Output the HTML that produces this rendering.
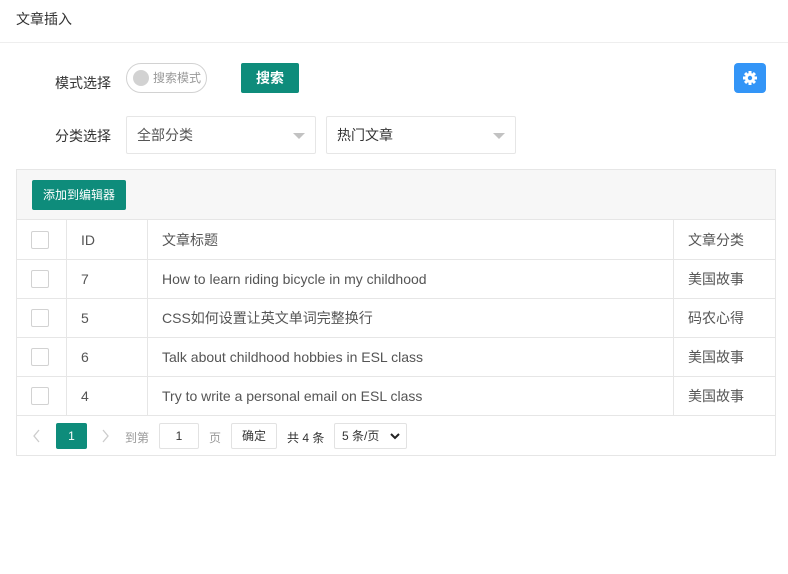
<!DOCTYPE html><html><head><meta charset="utf-8"><style>
*{box-sizing:border-box;margin:0;padding:0}
body{width:788px;height:574px;background:#fff;font-family:"Liberation Sans","Noto Sans CJK SC",sans-serif;font-size:14px;color:#333;position:relative;overflow:hidden}
.a{position:absolute}
.hd{left:0;top:0;width:788px;height:43px;border-bottom:1px solid #eee;padding:9px 16px;font-size:14px}
.btn{background:#0e8c7b;color:#fff;border-radius:2px;text-align:center}
.sel{border:1px solid #e6e6e6;border-radius:2px;height:38px;padding:0 10px;line-height:36px;color:#555}
.tri{position:absolute;right:10px;top:16px;border:6px solid transparent;border-top-color:#c2c2c2}
table{border-collapse:collapse;position:absolute;left:16px;top:219px;width:760px}
td{border:1px solid #e6e6e6;height:39px;padding:0 14px;color:#555;font-size:14px}
tr:first-child td{height:40px}
.cb{display:inline-block;width:18px;height:18px;border:1px solid #d2d2d2;border-radius:2px;vertical-align:middle;background:#fff}
.pg{font-size:12px;color:#666}
.bx{border:1px solid #e2e2e2;border-radius:2px;height:26px;line-height:24px;text-align:center}
</style></head><body>
<div class="a hd">文章插入</div>
<div class="a" style="left:55px;top:73px">模式选择</div>
<div class="a" style="left:126px;top:63px;width:81px;height:30px;border:1px solid #d2d2d2;border-radius:15px;font-size:12px;color:#999;line-height:28px;padding-left:26px">搜索模式<span class="a" style="left:6px;top:6px;width:16px;height:16px;border-radius:50%;background:#d2d2d2"></span></div>
<div class="a btn" style="left:241px;top:63px;width:58px;height:30px;line-height:30px;font-weight:bold">搜索</div>
<div class="a" style="left:734px;top:63px;width:32px;height:30px;background:#3395f7;border-radius:4px"><svg width="32" height="30" viewBox="0 0 32 30"><g fill="#fff" transform="translate(16,15)"><circle r="5"/><g><rect x="-1.5" y="-7" width="3" height="14"/><rect x="-1.5" y="-7" width="3" height="14" transform="rotate(45)"/><rect x="-1.5" y="-7" width="3" height="14" transform="rotate(90)"/><rect x="-1.5" y="-7" width="3" height="14" transform="rotate(135)"/></g><circle r="2.2" fill="#3395f7"/></g></svg></div>
<div class="a" style="left:55px;top:126px">分类选择</div>
<div class="a sel" style="left:126px;top:116px;width:190px">全部分类<span class="tri"></span></div>
<div class="a sel" style="left:326px;top:116px;width:190px;color:#333">热门文章<span class="tri"></span></div>
<div class="a" style="left:16px;top:169px;width:760px;height:287px;border:1px solid #e6e6e6;background:#fff"></div>
<div class="a" style="left:17px;top:170px;width:758px;height:50px;background:#f7f7f7"></div>
<div class="a btn" style="left:32px;top:180px;width:94px;height:30px;line-height:30px;font-size:12px">添加到编辑器</div>
<table>
<tr><td style="width:50px"><span class="cb"></span></td><td style="width:81px">ID</td><td style="width:526px">文章标题</td><td>文章分类</td></tr>
<tr><td><span class="cb"></span></td><td>7</td><td>How to learn riding bicycle in my childhood</td><td>美国故事</td></tr>
<tr><td><span class="cb"></span></td><td>5</td><td>CSS如何设置让英文单词完整换行</td><td>码农心得</td></tr>
<tr><td><span class="cb"></span></td><td>6</td><td>Talk about childhood hobbies in ESL class</td><td>美国故事</td></tr>
<tr><td><span class="cb"></span></td><td>4</td><td>Try to write a personal email on ESL class</td><td>美国故事</td></tr>
</table>
<svg class="a" style="left:32px;top:428px" width="10" height="16"><path d="M7 2 L2 8 L7 14" stroke="#ccc" stroke-width="1.3" fill="none"/></svg>
<div class="a btn" style="left:56px;top:423px;width:31px;height:26px;line-height:26px;font-size:12px">1</div>
<svg class="a" style="left:101px;top:428px" width="10" height="16"><path d="M2 2 L7 8 L2 14" stroke="#ccc" stroke-width="1.3" fill="none"/></svg>
<div class="a pg" style="left:125px;top:429px;color:#999">到第</div>
<div class="a bx pg" style="left:159px;top:423px;width:40px;color:#333">1</div>
<div class="a pg" style="left:209px;top:429px;color:#999">页</div>
<div class="a bx pg" style="left:231px;top:423px;width:46px;color:#333">确定</div>
<div class="a pg" style="left:287px;top:429px;color:#333">共 4 条</div>
<div class="a bx pg" style="left:334px;top:423px;width:73px;color:#333;text-align:left;padding-left:7px">5 条/页<svg style="position:absolute;right:6px;top:9px" width="10" height="7"><path d="M1 1 L5 5 L9 1" stroke="#222" stroke-width="2" fill="none"/></svg></div>
</body></html>
